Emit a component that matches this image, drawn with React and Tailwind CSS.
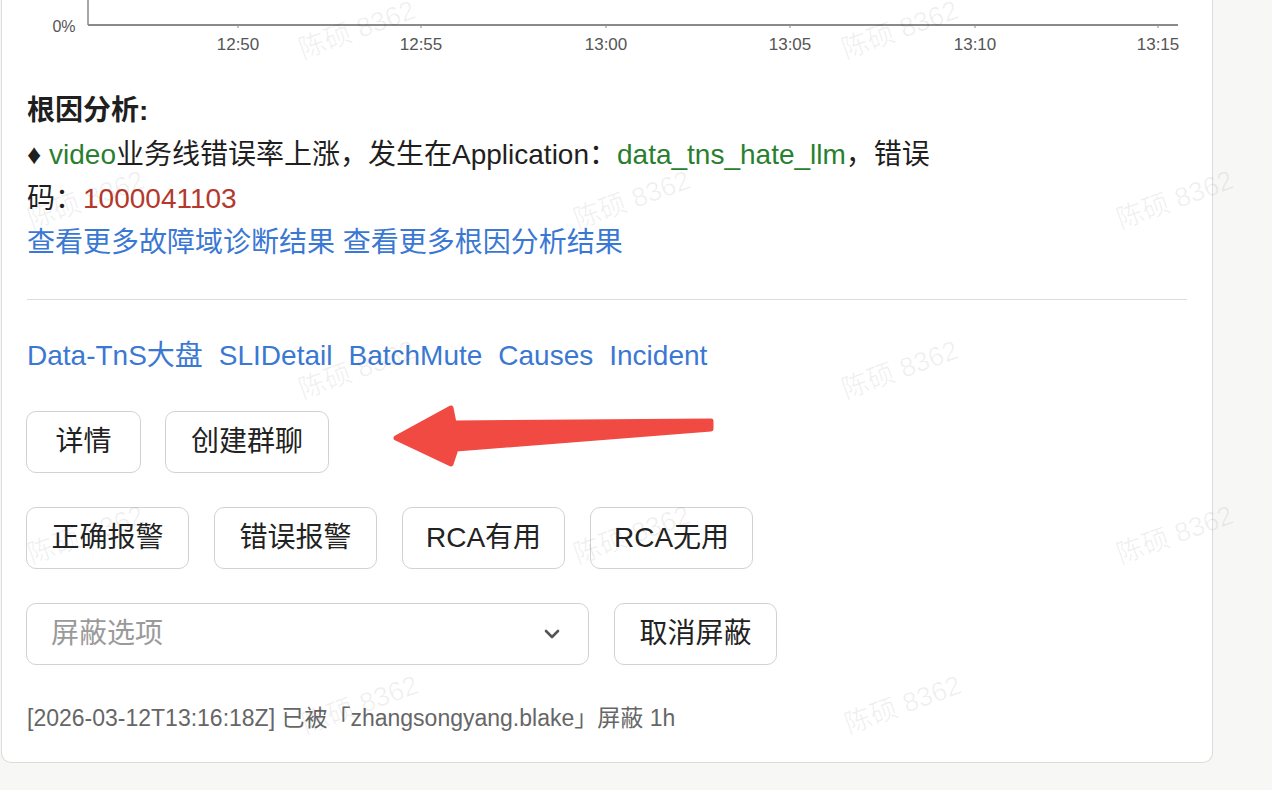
import { ChevronDown } from "lucide-react";

const TICKS = [
  { x: 236, label: "12:50" },
  { x: 419, label: "12:55" },
  { x: 604, label: "13:00" },
  { x: 788, label: "13:05" },
  { x: 973, label: "13:10" },
  { x: 1156, label: "13:15" },
];

const MARKS = [
  [357, 30], [900, 30],
  [86, 200], [632, 200], [1175, 200],
  [357, 370], [900, 370],
  [86, 535], [632, 535], [1175, 535],
  [360, 705], [903, 705],
];

function Chart() {
  return (
    <svg width="1210" height="58" className="block">
      <line x1="86" y1="0" x2="86" y2="25" stroke="#8a8a8a" strokeWidth="1.5" />
      <line x1="86" y1="25" x2="1176" y2="25" stroke="#8a8a8a" strokeWidth="2" />
      <text x="62" y="32" textAnchor="middle" fontSize="16" fill="#555" fontFamily="Liberation Sans, sans-serif">0%</text>
      {TICKS.map((t) => (
        <g key={t.label}>
          <line x1={t.x} y1="25" x2={t.x} y2="28" stroke="#8a8a8a" strokeWidth="1" />
          <text x={t.x} y="50" textAnchor="middle" fontSize="17" fill="#555" fontFamily="Liberation Sans, sans-serif">
            {t.label}
          </text>
        </g>
      ))}
    </svg>
  );
}

function Btn({ children, w }) {
  return (
    <button className={`h-[62px] ${w} border border-[#d2d2d2] rounded-[10px] bg-white text-[28px] text-[#222] leading-none`}>
      {children}
    </button>
  );
}

function Arrow() {
  return (
    <svg width="330" height="72" className="absolute left-[390px] top-[400px] pointer-events-none">
      <polygon
        points="6,38 61,8 64,23 321,21 321,29 66,49 61,64"
        fill="#f04a43"
        stroke="#f04a43"
        strokeWidth="5"
        strokeLinejoin="round"
      />
    </svg>
  );
}

export default function App() {
  return (
    <div className="relative min-h-[790px] overflow-hidden bg-[#f7f7f5] font-['Liberation_Sans','Noto_Sans_CJK_SC',sans-serif] text-[#1f1f1f]">
      <div className="ml-[1px] w-[1212px] bg-white border border-t-0 border-[#dcdcdc] rounded-b-[10px]">
        <Chart />
        <div className="px-[25px] pt-[31px] pb-[28px]">
          <div className="text-[28px] leading-[44px]">
            <div className="font-bold">根因分析:</div>
            <div>
              ♦ <span className="text-[#2a7f2f]">video</span>业务线错误率上涨，发生在Application：<span className="text-[#2a7f2f]">data_tns_hate_llm</span>，错误
            </div>
            <div>
              码：<span className="text-[#b5382d]">1000041103</span>
            </div>
            <div className="text-[#3a78d3]">
              查看更多故障域诊断结果 查看更多根因分析结果
            </div>
          </div>

          <div className="mt-[34px] h-px bg-[#dcdcdc]" />

          <div className="mt-[34px] flex gap-[16px] text-[28px] leading-[44px] text-[#3a78d3]">
            <span>Data-TnS大盘</span>
            <span>SLIDetail</span>
            <span>BatchMute</span>
            <span>Causes</span>
            <span>Incident</span>
          </div>

          <div className="mt-[33px] -ml-px flex flex-col gap-[34px]">
            <div className="flex gap-[24px]">
              <Btn w="w-[115px]">详情</Btn>
              <Btn w="w-[164px]">创建群聊</Btn>
            </div>
            <div className="flex gap-[25px]">
              <Btn w="w-[163px]">正确报警</Btn>
              <Btn w="w-[163px]">错误报警</Btn>
              <Btn w="w-[163px]">RCA有用</Btn>
              <Btn w="w-[163px]">RCA无用</Btn>
            </div>
            <div className="flex gap-[25px]">
              <div className="h-[62px] w-[563px] flex items-center justify-between border border-[#d2d2d2] rounded-[10px] bg-white pl-[24px] pr-[24px]">
                <span className="text-[28px] text-[#9a9a9a]">屏蔽选项</span>
                <ChevronDown size={24} strokeWidth={2.6} className="text-[#555]" />
              </div>
              <Btn w="w-[163px]">取消屏蔽</Btn>
            </div>
          </div>

          <div className="mt-[37px] text-[23px] leading-[32px] text-[#666]">
            [2026-03-12T13:16:18Z] 已被「zhangsongyang.blake」屏蔽 1h
          </div>
        </div>
      </div>

      <Arrow />

      <div className="absolute inset-0 pointer-events-none">
        {MARKS.map(([x, y]) => (
          <span
            key={`${x}-${y}`}
            className="absolute -translate-x-1/2 -translate-y-1/2 -rotate-[20deg] whitespace-nowrap text-[27px] text-black/[0.06]"
            style={{ left: x, top: y }}
          >
            陈硕 8362
          </span>
        ))}
      </div>
    </div>
  );
}
